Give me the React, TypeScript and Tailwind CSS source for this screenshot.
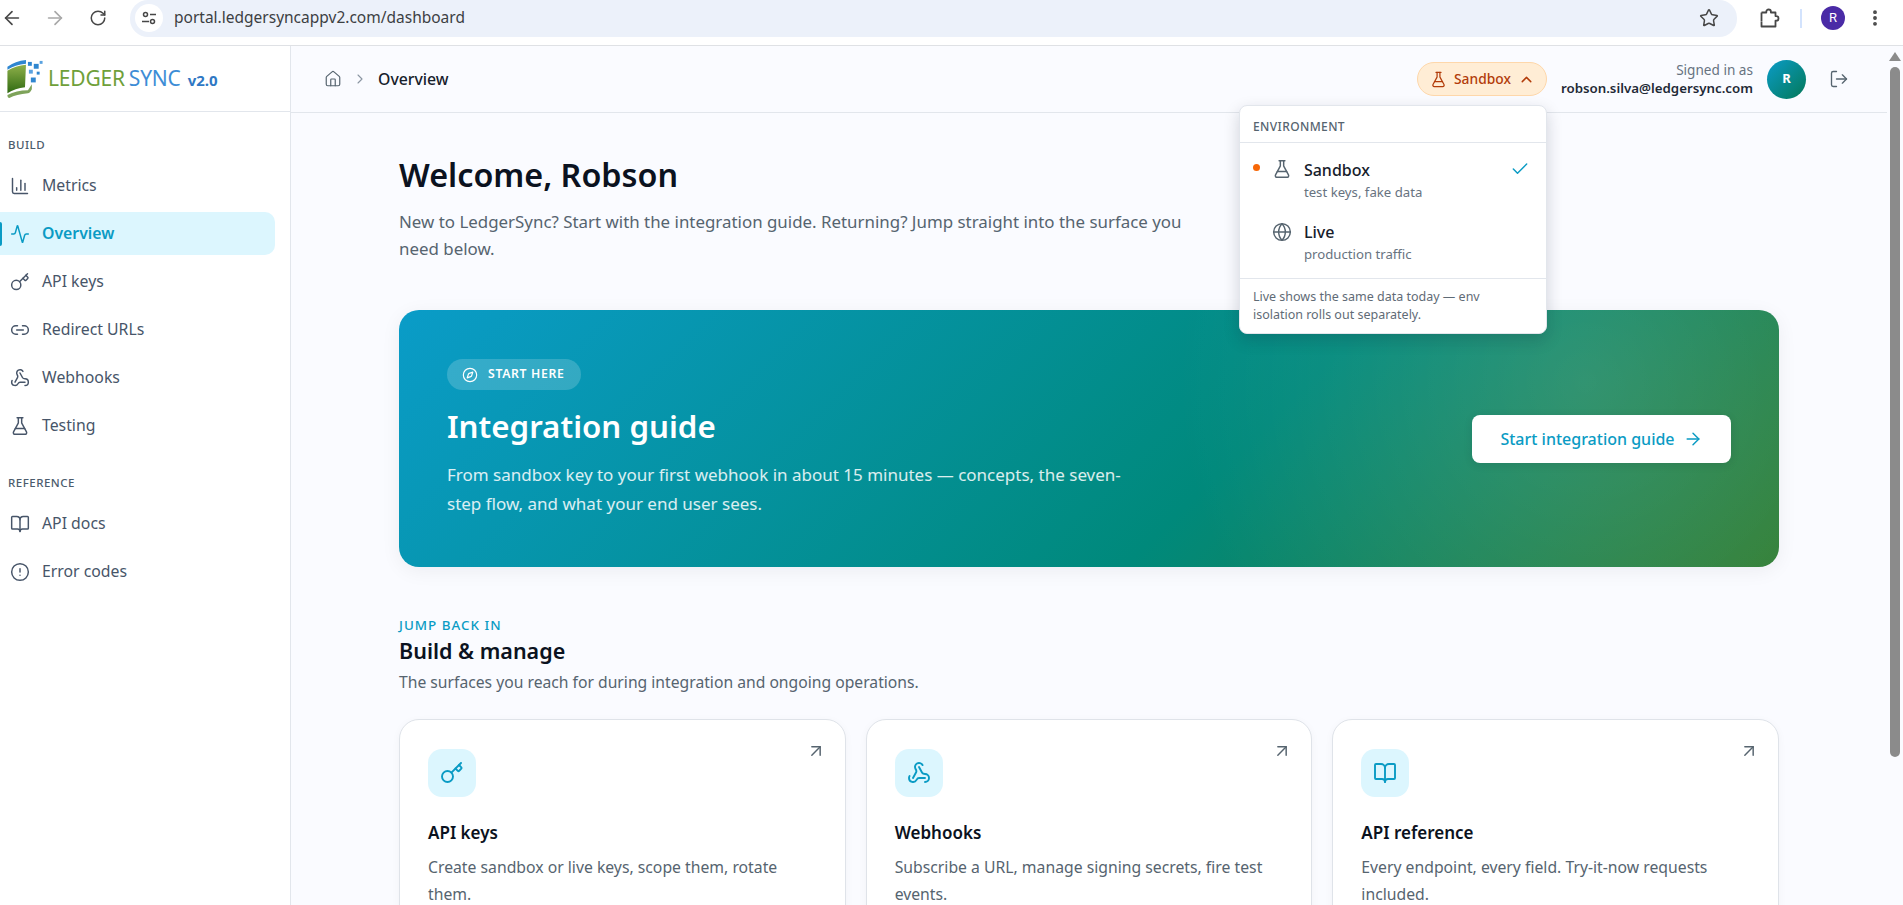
import React from 'react';
import {
  Activity, ArrowLeft, ArrowRight, ArrowUpRight, BookOpen, ChartColumn, Check, ChevronRight, ChevronUp,
  CircleAlert, Compass, EllipsisVertical, FlaskConical, Globe, House, Key, Link2, LogOut, RotateCw,
  Star, Webhook,
} from 'lucide-react';

const buildItems = [
  { label: 'Metrics', icon: ChartColumn },
  { label: 'Overview', icon: Activity, active: true },
  { label: 'API keys', icon: Key },
  { label: 'Redirect URLs', icon: Link2 },
  { label: 'Webhooks', icon: Webhook },
  { label: 'Testing', icon: FlaskConical },
];

const referenceItems = [
  { label: 'API docs', icon: BookOpen },
  { label: 'Error codes', icon: CircleAlert },
];

const cards = [
  { title: 'API keys', icon: Key, text: 'Create sandbox or live keys, scope them, rotate them.' },
  { title: 'Webhooks', icon: Webhook, text: 'Subscribe a URL, manage signing secrets, fire test events.' },
  { title: 'API reference', icon: BookOpen, text: 'Every endpoint, every field. Try-it-now requests included.' },
];

const BrowserBar = () => (
  <div className="h-[46px] shrink-0 flex items-start bg-white border-b border-[#dfe1e5] font-['Roboto',sans-serif]">
    <div className="w-[130px] h-[36px] shrink-0 flex items-center text-[#474747]">
      <ArrowLeft className="w-[22px] h-[22px] ml-[1px]" strokeWidth={1.8} />
      <ArrowRight className="w-[22px] h-[22px] ml-[21px] text-[#a8a8a8]" strokeWidth={1.8} />
      <RotateCw className="w-[18px] h-[18px] ml-[23px]" strokeWidth={2} />
    </div>
    <div className="w-[1607px] h-[37px] shrink-0 flex items-center rounded-[18px] bg-[#ecf1fa] pl-[5px] pr-[18px] pb-[1px]">
      <div className="w-[28px] h-[28px] rounded-full bg-white flex items-center justify-center text-[#474747]">
        <svg width="16" height="16" viewBox="0 0 16 16" fill="none" stroke="currentColor" strokeWidth="1.5">
          <circle cx="4.5" cy="4.5" r="2" />
          <path d="M9 4.5h6M1 11.5h7" />
          <circle cx="11.5" cy="11.5" r="2" />
        </svg>
      </div>
      <span className="ml-[11px] text-[15.5px] text-[#3c4043] font-['Noto_Sans',sans-serif]">portal.ledgersyncappv2.com/dashboard</span>
      <Star className="w-[20px] h-[20px] ml-auto text-[#474747]" strokeWidth={1.8} />
    </div>
    <div className="flex-1 h-[36px] flex items-center text-[#474747]">
      <svg width="20" height="20" viewBox="0 0 20 20" fill="none" stroke="currentColor" strokeWidth="1.8" strokeLinejoin="round" className="ml-[23px] shrink-0">
        <path d="M1.5 4.5h4.8V3.8a2.3 2.3 0 0 1 4.6 0v.7h4.6v3.6h.7a2.3 2.3 0 0 1 0 4.6h-.7v5.8H1.5v-4.4" />
        <path d="M1.5 13.7V4.5" />
      </svg>
      <div className="w-[2px] h-[19px] bg-[#d3e3fd] ml-[20px]" />
      <div className="w-[24px] h-[24px] rounded-full bg-[#4a2ba6] text-white text-[13px] flex items-center justify-center ml-[19px]">R</div>
      <EllipsisVertical className="w-[20px] h-[20px] ml-[20px]" strokeWidth={2.6} />
    </div>
  </div>
);

const Logo = () => (
  <div className="h-[66px] shrink-0 flex items-center border-b border-[#e2e6ec] pl-[6px]">
    <svg width="38" height="41" viewBox="0 0 38 42" className="shrink-0">
      <defs>
        <linearGradient id="leaf" x1="0" y1="0" x2="0" y2="1">
          <stop offset="0" stopColor="#8fb04a" />
          <stop offset="1" stopColor="#2f6a12" />
        </linearGradient>
      </defs>
      <path d="M1 9 Q9 3 20 2 L20 6 Q9 7 1 12 Z" fill="#2f86d0" />
      <path d="M1 13 Q9 8 20 7 L19 30 Q9 31 1 36 Z" fill="url(#leaf)" />
      <path d="M1 38 Q10 33 22 33 L26 27 L26 32 Q24 36 22 36 Q10 37 3 41 Q1 41 1 38 Z" fill="#7ea35a" />
      <rect x="22" y="4" width="4" height="4" fill="#2f86d0" />
      <rect x="28" y="6" width="5" height="5" fill="#2f86d0" />
      <rect x="34" y="3" width="3" height="3" fill="#5aa2e0" />
      <rect x="23" y="12" width="4" height="4" fill="#5aa2e0" />
      <rect x="31" y="14" width="3" height="3" fill="#2f86d0" />
      <rect x="25" y="20" width="5" height="5" fill="#2f86d0" />
    </svg>
    <span className="ml-[4px] text-[21px] tracking-[-0.2px] text-[#6fa03a]">LEDGER</span>
    <span className="ml-[4px] text-[21px] tracking-[-0.2px] text-[#3d8dd6]">SYNC</span>
    <span className="ml-[7px] mt-[4px] text-[15px] font-bold text-[#2f78c4]">v2.0</span>
  </div>
);

const NavRow = ({ label, icon: Icon, active }: { label: string; icon: React.ElementType; active?: boolean }) => (
  <div
    className={`relative h-[43px] mr-[15px] pl-[10px] flex items-center gap-[12px] rounded-r-[10px] text-[15.8px] ${
      active ? 'bg-[#dcf6fe] text-[#0a9bc4] font-semibold' : 'text-[#475569]'
    }`}
  >
    {active && <span className="absolute left-0 top-[10px] w-[2px] h-[24px] rounded-r bg-[#0a9bc4]" />}
    <Icon className="w-[20px] h-[20px] shrink-0" strokeWidth={1.75} />
    <span>{label}</span>
  </div>
);

const Sidebar = () => (
  <aside className="w-[291px] shrink-0 flex flex-col bg-white border-r border-[#e2e6ec]">
    <Logo />
    <nav className="flex flex-col pt-[25px]">
      <div className="pl-[8px] h-[16px] leading-[16px] text-[11.5px] font-medium tracking-[0.5px] text-[#4b5b6c] mb-[11px]">BUILD</div>
      <div className="flex flex-col gap-[5px]">
        {buildItems.map((item) => (
          <NavRow key={item.label} {...item} />
        ))}
      </div>
      <div className="pl-[8px] h-[16px] leading-[16px] text-[11.5px] font-medium tracking-[0.5px] text-[#4b5b6c] mt-[28px] mb-[11px]">REFERENCE</div>
      <div className="flex flex-col gap-[5px]">
        {referenceItems.map((item) => (
          <NavRow key={item.label} {...item} />
        ))}
      </div>
    </nav>
  </aside>
);

const EnvMenu = () => (
  <div className="absolute right-0 top-[43px] w-[308px] z-20 bg-white rounded-[8px] border border-[#e2e6ec] shadow-[0_6px_16px_rgba(15,23,42,0.18)]">
    <div className="h-[37px] px-[13px] pt-[6px] flex items-center border-b border-[#e2e6ec] text-[12px] font-medium tracking-[0.4px] text-[#56646f]">ENVIRONMENT</div>
    <div className="pt-[11px]">
      <div className="relative h-[62px] flex pl-[32px] pr-[16px] pt-[5px]">
        <span className="absolute left-[13px] top-[10px] w-[7px] h-[7px] rounded-full bg-[#f76707]" />
        <FlaskConical className="w-[20px] h-[20px] text-[#56646f]" strokeWidth={1.75} />
        <div className="ml-[12px] flex-1">
          <div className="text-[16px] leading-[22px] font-medium text-[#16202b]">Sandbox</div>
          <div className="text-[13.2px] leading-[22px] text-[#67737f]">test keys, fake data</div>
        </div>
        <Check className="w-[20px] h-[20px] text-[#0a9bc4]" strokeWidth={1.75} />
      </div>
      <div className="h-[62px] flex pl-[32px] pr-[16px] pt-[5px]">
        <Globe className="w-[20px] h-[20px] mt-[1px] text-[#56646f]" strokeWidth={1.75} />
        <div className="ml-[12px]">
          <div className="text-[16px] leading-[22px] font-medium text-[#16202b]">Live</div>
          <div className="text-[13.2px] leading-[22px] text-[#67737f]">production traffic</div>
        </div>
      </div>
    </div>
    <div className="pl-[13px] pr-[40px] pt-[9px] pb-[9px] border-t border-[#e2e6ec] text-[12.5px] leading-[18px] text-[#5f6b76]">
      Live shows the same data today — env isolation rolls out separately.
    </div>
  </div>
);

const TopBar = () => (
  <header className="h-[67px] shrink-0 flex items-center border-b border-[#e2e6ec] pl-[33px] pr-[38px]">
    <House className="w-[18px] h-[18px] text-[#56646f]" strokeWidth={1.6} />
    <ChevronRight className="w-[16px] h-[16px] ml-[10px] text-[#8a95a1]" strokeWidth={1.6} />
    <span className="ml-[10px] pt-[1px] text-[15.8px] font-medium text-[#16202b]">Overview</span>
    <div className="ml-auto relative">
      <div className="h-[34px] pl-[12px] pr-[11px] flex items-center gap-[7px] rounded-full bg-[#ffedd5] border border-[#fed7aa] text-[13.8px] font-medium text-[#b23c0a]">
        <FlaskConical className="w-[17px] h-[17px]" strokeWidth={1.75} />
        <span>Sandbox</span>
        <ChevronUp className="w-[17px] h-[17px]" strokeWidth={2} />
      </div>
      <EnvMenu />
    </div>
    <div className="ml-[14px] text-right">
      <div className="text-[13.6px] leading-[18px] text-[#67737f]">Signed in as</div>
      <div className="text-[13.3px] leading-[18px] font-semibold text-[#1f2a36]">robson.silva@ledgersync.com</div>
    </div>
    <div className="ml-[14px] w-[39px] h-[39px] rounded-full bg-[linear-gradient(135deg,#0a9cc8,#047857)] text-white text-[13px] font-bold flex items-center justify-center">R</div>
    <LogOut className="w-[20px] h-[20px] ml-[23px] text-[#56646f]" strokeWidth={1.6} />
  </header>
);

const Hero = () => (
  <section className="mt-[48px] h-[257px] shrink-0 px-[48px] flex items-center justify-between rounded-[20px] shadow-[0_4px_20px_rgba(15,23,42,0.06)] bg-[radial-gradient(circle_at_86%_28%,rgba(255,255,255,0.13),transparent_34%),linear-gradient(135deg,#0a9cc8_0%,#00897b_60%,#2e7d32_100%)]">
    <div className="w-[680px]">
      <div className="inline-flex h-[31px] items-center gap-[10px] pl-[15px] pr-[16px] rounded-full bg-white/18 text-white text-[12.2px] font-semibold tracking-[0.7px]">
        <Compass className="w-[16px] h-[16px]" strokeWidth={1.75} />
        START HERE
      </div>
      <h2 className="mt-[12px] text-[31.3px] leading-[48px] font-semibold text-white">Integration guide</h2>
      <p className="mt-[10px] text-[17px] leading-[29px] text-white/85">
        From sandbox key to your first webhook in about 15 minutes — concepts, the seven-step flow, and what your end user sees.
      </p>
    </div>
    <div className="h-[48px] w-[259px] shrink-0 flex items-center justify-center gap-[8px] rounded-[8px] bg-white shadow-[0_2px_8px_rgba(15,23,42,0.12)] text-[16px] font-medium text-[#0a9bc4]">
      Start integration guide
      <ArrowRight className="w-[20px] h-[20px]" strokeWidth={1.75} />
    </div>
  </section>
);

const Card = ({ title, icon: Icon, text }: { title: string; icon: React.ElementType; text: string }) => (
  <div className="relative h-[260px] rounded-[20px] border border-[#dfe3e9] bg-white px-[28px] pt-[29px] shadow-[0_2px_8px_rgba(15,23,42,0.04)]">
    <ArrowUpRight className="absolute right-[19px] top-[21px] w-[20px] h-[20px] text-[#56646f]" strokeWidth={1.75} />
    <div className="w-[48px] h-[48px] rounded-[14px] bg-[#dcf6fe] flex items-center justify-center text-[#0a9bc4]">
      <Icon className="w-[24px] h-[24px]" strokeWidth={1.9} />
    </div>
    <h3 className="mt-[22px] text-[17px] leading-[28px] font-semibold text-[#0b1220]">{title}</h3>
    <p className="mt-[7px] text-[15.75px] leading-[27px] text-[#56646f]">{text}</p>
  </div>
);

const Scrollbar = () => (
  <div className="w-[16px] shrink-0 flex flex-col items-center bg-[#fafbff]">
    <div className="mt-[6px] w-0 h-0 border-l-[6px] border-r-[6px] border-b-[9px] border-l-transparent border-r-transparent border-b-[#8b8b8b]" />
    <div className="mt-[6px] w-[10px] h-[690px] rounded-full bg-[#8b8b8b]" />
  </div>
);

export default function App() {
  return (
    <div className="h-screen overflow-hidden flex flex-col bg-[#fafbff] font-['Noto_Sans',sans-serif]">
      <BrowserBar />
      <div className="flex-1 flex min-h-0">
        <Sidebar />
        <div className="flex-1 min-w-0 flex flex-col">
          <TopBar />
          <main className="flex-1 min-h-0 overflow-hidden px-[108px] pt-[37px]">
            <h1 className="text-[32.3px] leading-[48px] font-semibold text-[#0b1220]">Welcome, Robson</h1>
            <p className="mt-[10px] max-w-[800px] text-[16.9px] leading-[27px] text-[#56646f]">
              New to LedgerSync? Start with the integration guide. Returning? Jump straight into the surface you need below.
            </p>
            <Hero />
            <div className="mt-[49px] text-[13.4px] leading-[18px] font-medium tracking-[1px] text-[#0a9bc4]">JUMP BACK IN</div>
            <h2 className="mt-[2px] text-[21.5px] leading-[30px] font-semibold text-[#0b1220]">Build &amp; manage</h2>
            <p className="mt-[3px] text-[15.7px] leading-[26px] text-[#56646f]">The surfaces you reach for during integration and ongoing operations.</p>
            <div className="mt-[24px] grid grid-cols-3 gap-[20px]">
              {cards.map((card) => (
                <Card key={card.title} {...card} />
              ))}
            </div>
          </main>
        </div>
        <Scrollbar />
      </div>
    </div>
  );
}
